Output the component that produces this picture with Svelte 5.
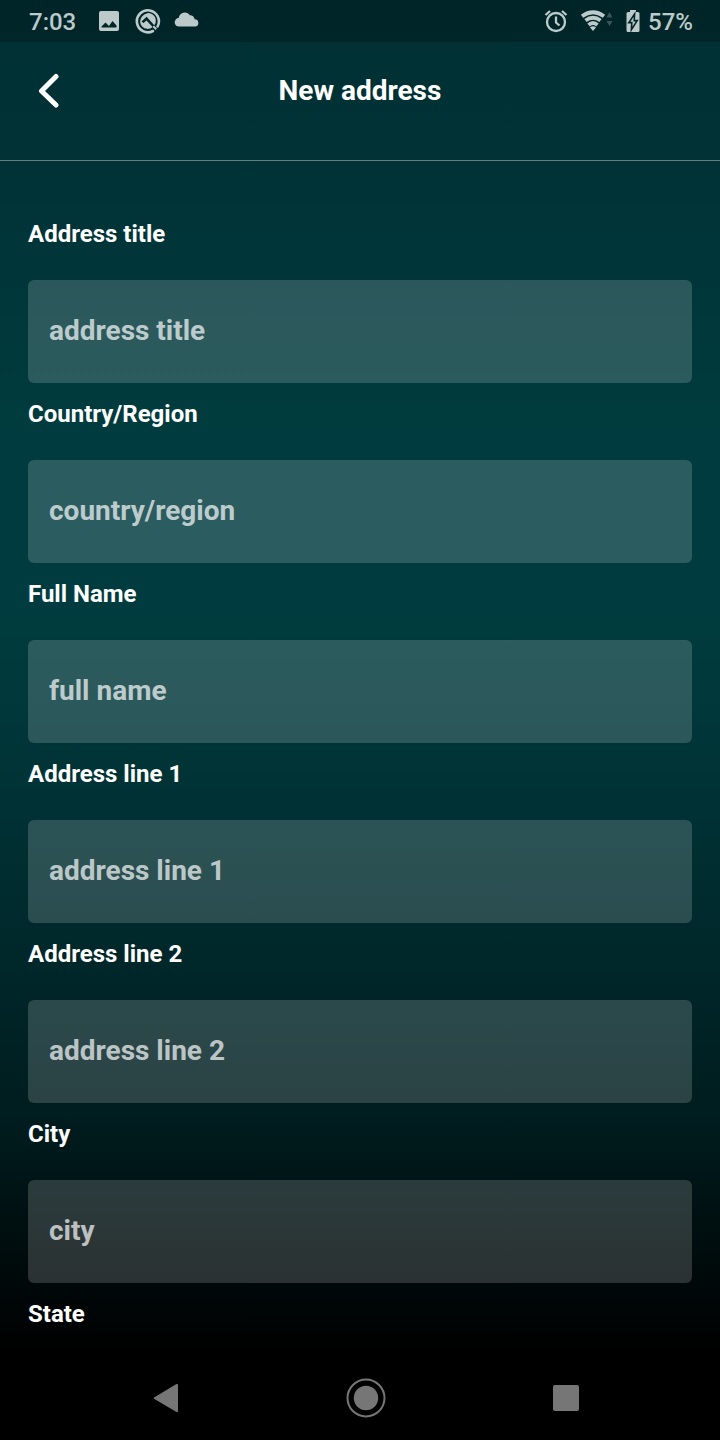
<script>
  const fields = [
    { id: 'title', label: 'Address title', placeholder: 'address title' },
    { id: 'country', label: 'Country/Region', placeholder: 'country/region' },
    { id: 'name', label: 'Full Name', placeholder: 'full name' },
    { id: 'line1', label: 'Address line 1', placeholder: 'address line 1' },
    { id: 'line2', label: 'Address line 2', placeholder: 'address line 2' },
    { id: 'city', label: 'City', placeholder: 'city' },
    { id: 'state', label: 'State', placeholder: 'state' }
  ];
</script>

<div class="screen">
  <div class="status">
    <span class="clock">7:03</span>
    <svg class="picture" width="22" height="22" viewBox="0 0 22 22" aria-hidden="true">
      <path fill="currentColor" fill-rule="evenodd" d="M3 1h16a2 2 0 0 1 2 2v16a2 2 0 0 1-2 2H3a2 2 0 0 1-2-2V3a2 2 0 0 1 2-2zM3.500 17.500h15v-2L14.500 11L11 16L7.500 12.500L3.500 16.500z" />
    </svg>
    <svg class="ring" width="26" height="26" viewBox="0 0 26 26" aria-hidden="true">
      <path d="M18 23A11 11 0 1 1 22.600 18.400" fill="none" stroke="currentColor" stroke-width="2.600" stroke-linecap="round" />
      <path d="M7.500 8A7.400 7.400 0 0 1 19.300 17.200L11.600 8.800L6.500 13.500L8.500 15L11.500 12.400L17.600 18.900A7.400 7.400 0 0 1 7.500 8z" fill="currentColor" />
      <path d="M18.300 18.300L21.300 21.300" stroke="currentColor" stroke-width="2" />
    </svg>
    <svg class="cloud" width="26" height="22" viewBox="0 0 26 22" aria-hidden="true">
      <path fill="currentColor" d="M5 16.500a4.200 4.200 0 0 1-.3-8.400A6.200 6.200 0 0 1 16 5.200A5 5 0 0 1 20.600 9.200A3.700 3.700 0 0 1 21.500 16.500z" />
    </svg>
    <div class="system">
      <svg width="24" height="24" viewBox="0 0 24 24" fill="none" stroke="currentColor" stroke-width="2.300" aria-hidden="true">
        <circle cx="12" cy="13" r="9" />
        <path d="M12 7.500V13.500L15.500 16.500M1.500 6L6 2M18 2L22.500 6" />
      </svg>
      <svg class="wifi" width="34" height="24" viewBox="0 0 34 24" fill="none" stroke="currentColor" aria-hidden="true">
        <path stroke-width="3.800" d="M2 7.200Q13 -.8 24 7.200M5.500 11.600Q13 6 20.500 11.600M8.600 16Q13 12 17.400 16" />
        <path fill="currentColor" stroke="none" d="M10 18.500Q13 16.200 16 18.500L13 22z" />
        <path fill="currentColor" stroke="none" opacity=".3" d="M26.500 8.500L29.500 3L32.500 8.500zM26.500 12L29.500 17L32.500 12z" />
      </svg>
      <svg width="14" height="24" viewBox="0 0 14 24" aria-hidden="true">
        <path fill="currentColor" d="M4 1h6v2h2a1.500 1.500 0 0 1 1.500 1.500v17a1.500 1.500 0 0 1-1.500 1.500H2a1.500 1.500 0 0 1-1.500-1.500v-17A1.500 1.500 0 0 1 2 3h2z" />
        <path fill="currentColor" stroke="#00262a" stroke-width="1.600" d="M8.600 5L2.800 13.600H5.800L5.400 20.800L11.200 11.600H8.200z" />
      </svg>
      <span class="percent">57%</span>
    </div>
  </div>

  <header>
    <button class="back" type="button" aria-label="Back">
      <svg width="24" height="36" viewBox="0 0 24 36" fill="none" stroke="currentColor" stroke-width="5" stroke-linecap="round" stroke-linejoin="round" aria-hidden="true">
        <path d="M20 4.500L5.500 19L20 33" />
      </svg>
    </button>
    <h1>New address</h1>
  </header>

  <main>
    <form>
      {#each fields as field}
        <div class="field">
          <label for={field.id}>{field.label}</label>
          <input id={field.id} type="text" placeholder={field.placeholder} />
        </div>
      {/each}
    </form>
  </main>

  <nav>
    <button type="button" aria-label="Back">
      <svg width="40" height="40" viewBox="0 0 40 40" aria-hidden="true">
        <path fill="currentColor" d="M8 19.500Q7.500 20 8 20.700L30.500 34Q32 34.500 32 33V7Q32 5.500 30.500 6z" />
      </svg>
    </button>
    <button type="button" aria-label="Home">
      <svg width="40" height="40" viewBox="0 0 40 40" aria-hidden="true">
        <circle cx="20" cy="20" r="18.500" fill="none" stroke="currentColor" stroke-width="2" />
        <circle cx="20" cy="20" r="12.200" fill="currentColor" />
      </svg>
    </button>
    <button type="button" aria-label="Recent apps">
      <svg width="40" height="40" viewBox="0 0 40 40" aria-hidden="true">
        <rect x="7" y="7" width="26" height="26" rx="2" fill="currentColor" />
      </svg>
    </button>
  </nav>
</div>

<style>
  :global(body) {
    margin: 0;
    background: #000;
  }
  .screen {
    display: flex;
    flex-direction: column;
    height: 100vh;
    overflow: hidden;
    font-family: Roboto, sans-serif;
    color: #fff;
    background: linear-gradient(#003034 0%, #003236 11%, #003c3f 31%, #003c3f 42%, #003639 51%, #00292c 65%, #001c1e 78%, #000a0b 88%, #000 94%);
  }
  svg {
    display: block;
    flex: none;
  }
  .status {
    display: flex;
    align-items: center;
    flex: none;
    box-sizing: border-box;
    height: 42px;
    padding: 0 27px 0 29px;
    background: rgba(0, 0, 0, 0.22);
    color: #bccaca;
    font-size: 24px;
    font-weight: 500;
    line-height: 40px;
  }
  .clock {
    padding-top: 2px;
  }
  .picture {
    margin-left: 22px;
  }
  .ring {
    margin-left: 15px;
  }
  .cloud {
    margin-left: 13px;
  }
  .system {
    display: flex;
    align-items: center;
    margin-left: auto;
  }
  .wifi {
    margin: 0 12px;
  }
  .percent {
    margin-left: 8px;
    padding-top: 2px;
  }
  header {
    display: grid;
    grid-template-columns: 40px 1fr 40px;
    align-items: start;
    flex: none;
    box-sizing: border-box;
    height: 119px;
    padding: 30px 28px 0;
    border-bottom: 1px solid #5f8083;
  }
  button {
    display: flex;
    align-items: center;
    justify-content: center;
    padding: 0;
    border: 0;
    background: none;
    color: inherit;
    cursor: pointer;
  }
  .back {
    height: 36px;
  }
  h1 {
    margin: 0;
    font-size: 28px;
    font-weight: 700;
    line-height: 38px;
    text-align: center;
  }
  main {
    flex: 1;
    min-height: 0;
    overflow-y: auto;
    scrollbar-width: none;
  }
  form {
    padding: 42px 28px;
  }
  .field {
    display: flex;
    flex-direction: column;
    gap: 32px;
    padding-top: 17px;
  }
  label {
    font-size: 24px;
    font-weight: 700;
    line-height: 28px;
  }
  input {
    box-sizing: border-box;
    width: 100%;
    height: 103px;
    padding: 0 21px 2px;
    border: 0;
    border-radius: 6px;
    outline: none;
    background: rgba(255, 255, 255, 0.17);
    color: #fff;
    font: 700 28px Roboto, sans-serif;
  }
  input::placeholder {
    color: rgba(255, 255, 255, 0.7);
    opacity: 1;
  }
  nav {
    display: flex;
    align-items: center;
    justify-content: space-between;
    flex: none;
    height: 84px;
    padding: 0 134px 0 146px;
    background: #000;
    color: #767676;
  }
</style>
